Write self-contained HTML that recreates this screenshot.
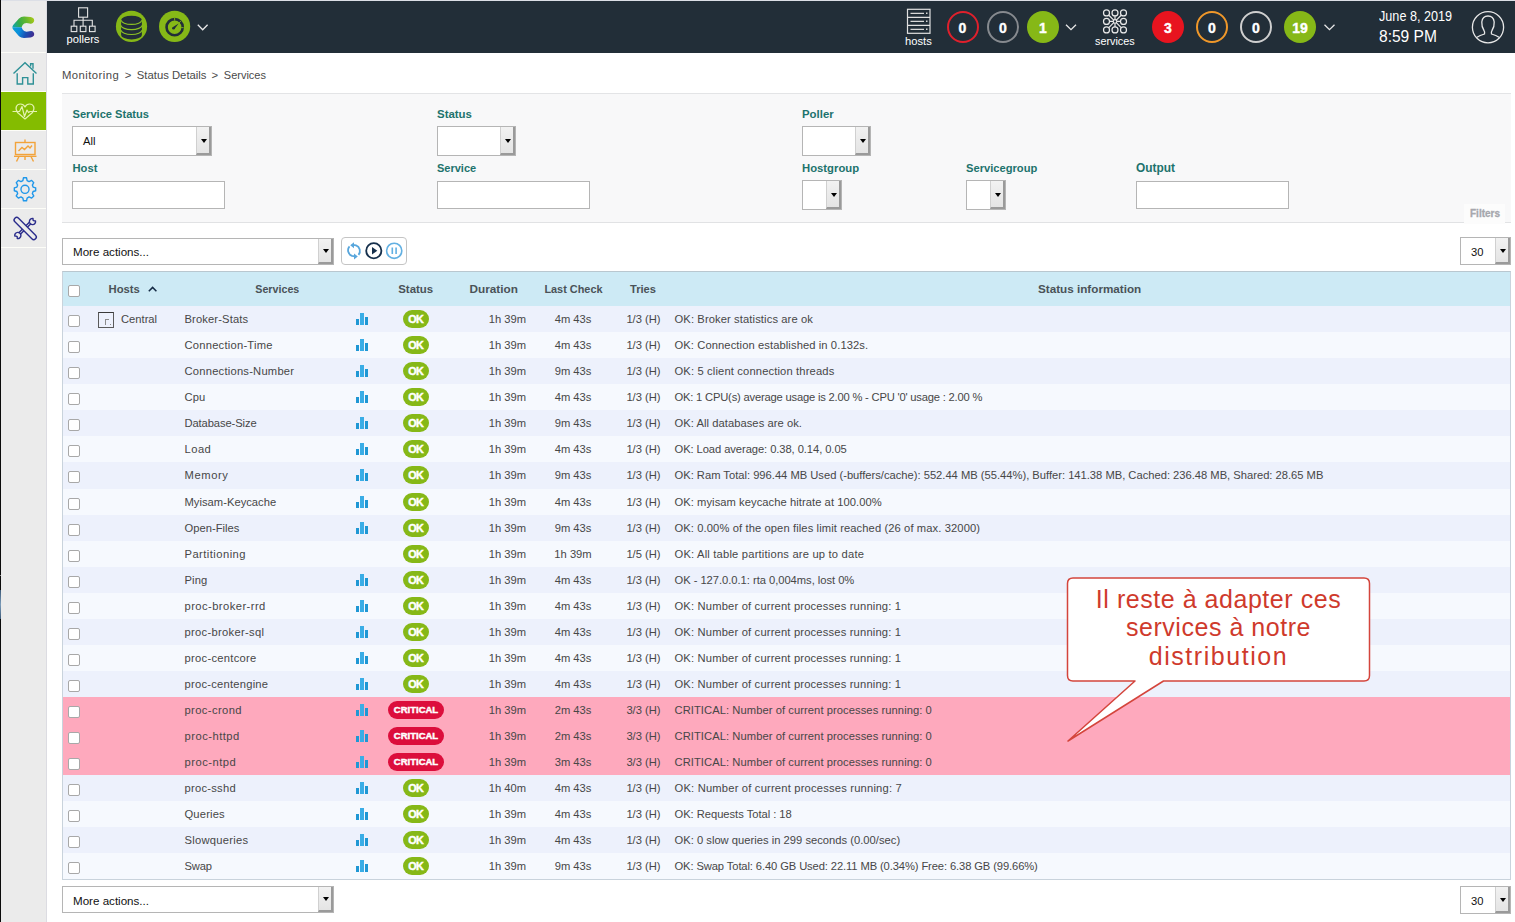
<!DOCTYPE html>
<html><head><meta charset="utf-8"><title>Centreon - Services</title>
<style>
*{box-sizing:border-box;margin:0;padding:0}
html,body{width:1515px;height:922px;overflow:hidden;background:#fff;font-family:"Liberation Sans",sans-serif;color:#333}
body{position:relative}
.a{position:absolute;display:block}
/* frame */
#topline{left:0;top:0;width:1515px;height:1px;background:#dcdfe6}
#leftline{left:0;top:0;width:1px;height:922px;background:#0a0a0a}
#side{left:1px;top:1px;width:45px;height:921px;background:#ebebeb}
#sideb{left:46px;top:1px;width:1px;height:921px;background:#dcdce2}
.sep{left:1px;width:45px;height:1px;background:#fdfdf8}
#green{left:1px;top:92px;width:45px;height:38px;background:#84bc00}
#header{left:47px;top:1px;width:1468px;height:52px;background:#222e38}
/* header text */
.htxt{color:#fff;font-size:11.2px;line-height:12px;white-space:nowrap}
.circ{width:32px;height:32px;border-radius:50%;color:#fff;font-weight:bold;font-size:14px;line-height:34px;text-align:center;top:11px;-webkit-text-stroke:0.4px #fff}
.chev{width:11px;height:7px;top:24px}
/* breadcrumb */
.bc{top:68px;font-size:11.3px;color:#4a4a4a;white-space:nowrap;line-height:14px}
/* filter panel */
#fpanel{left:62px;top:93px;width:1449px;height:130px;background:#f8f8f9;border-top:1px solid #e3e4e6;border-bottom:1px solid #e1e2e4}
.lbl{font-size:11.1px;font-weight:bold;color:#1d736d;line-height:12px;white-space:nowrap}
.inp{background:#fff;border:1px solid #b5b5b5}
.sel{background:#fff;border:1px solid #b5b5b5}
.sel .btn{position:absolute;right:0;top:0;bottom:0;width:15px;background:linear-gradient(#f2f2f2,#e4e4e4);border-left:1px solid #d0d0d0;border-right:2px solid #9a9a9a;border-bottom:2px solid #9a9a9a}
.sel .btn:after{content:"";position:absolute;left:3.5px;top:50%;margin-top:-1.5px;border-left:3.5px solid transparent;border-right:3.5px solid transparent;border-top:4px solid #000}
.seltxt{position:absolute;left:10px;font-size:11.2px;color:#111;white-space:nowrap}
#filtab{left:1464px;top:204px;width:41px;height:20px;background:#fcfcfc}
#filtxt{left:1470px;top:208px;font-size:10px;font-weight:bold;color:#a6a7ad;line-height:12px;-webkit-text-stroke:0.3px #a6a7ad}
/* toolbar */
#btngrp{left:341px;top:237px;width:66px;height:28px;border:1px solid #c4c4c4;border-radius:4px;background:#fff}
/* table */
#thead{left:62px;top:271px;width:1449px;height:34.5px;background:#cdeaf5;border-top:1px solid #b9c7cf;border-left:1px solid #c9d3dc;border-right:1px solid #c9d3dc}
.th{font-size:11.3px;font-weight:bold;color:#4a5258;line-height:12px;top:283px;white-space:nowrap}
#tbody{left:62px;top:305px;width:1449px;height:575px;border:1px solid #c9d3dc;border-top:none}
.row{position:absolute;left:63px;width:1447px;height:26.09px}
.rc{position:absolute;left:63px;width:1447px;height:26px}
.odd{background:#edf1fc}
.even{background:#f6f9fe}
.crit{background:#fea9bd}
.rc .c{position:absolute;top:0;line-height:26px;font-size:11.2px;color:#474747;white-space:nowrap;padding-top:1px}
.cb{position:absolute;left:5px;top:10px;width:12px;height:12px;border:1px solid #a8a8a8;border-radius:2px;background:#fff}
.hicon{position:absolute;left:35px;top:7px;width:16px;height:16px;border:1px solid #5a5a5a;border-top-color:#3a3a3a;background:transparent}
.hicon b{position:absolute;left:5.5px;top:5.5px;width:4px;height:6px;border-left:1px solid #8c8c8c;border-top:1px solid #8c8c8c}
.hicon b:after{content:"";position:absolute;left:4px;top:4.5px;width:1px;height:1px;background:#8c8c8c}
.host{left:58px}
.svc{left:121.5px}
.graph{position:absolute;left:292.5px;top:7px;width:14px;height:13px}
.graph b{position:absolute;bottom:0;width:3px;background:#1f97d4}
.graph b:nth-child(1){left:0;height:6px}
.graph b:nth-child(2){left:4.5px;width:4px;height:12px;background:#3aade6}
.graph b:nth-child(3){left:9.5px;height:8px}
.badge{position:absolute;top:5px;height:18px;border-radius:9px;color:#fff;font-weight:bold;font-size:9.8px;line-height:18px;text-align:center;-webkit-text-stroke:0.45px #fff}
.ok{left:340px;width:26px;background:#86b817;font-size:10.8px;letter-spacing:-0.7px;text-indent:-0.7px}
.cr{left:325px;width:56px;background:#dc0e3c;font-size:9.5px}
.dur{right:984px;text-align:right}
.lc{left:480px;width:60px;text-align:center}
.tr{left:550px;width:61px;text-align:center}
.info{left:611.5px}
.cbh{left:68px;top:285px;width:12px;height:12px;border:1px solid #a8a8a8;border-radius:2px;background:#fff}

</style></head><body>
<div id="topline" class="a"></div>
<div id="side" class="a"></div>
<div id="sideb" class="a"></div>
<div class="a sep" style="top:52px"></div>
<div class="a sep" style="top:91px"></div>
<div id="green" class="a"></div>
<div class="a sep" style="top:130px"></div>
<div class="a sep" style="top:169px"></div>
<div class="a sep" style="top:208px"></div>
<div class="a sep" style="top:247px"></div>
<div id="leftline" class="a"></div>
<div class="a" style="left:0;top:590px;width:1px;height:29px;background:linear-gradient(#3d5a78,#7a9ab8,#3d5a78)"></div>
<div class="a" style="left:0;top:575px;width:1px;height:1px;background:#888"></div>

<!-- sidebar icons -->
<svg class="a" style="left:0;top:0" width="47" height="250" viewBox="0 0 47 250">
  <defs>
    <linearGradient id="lg" x1="0" y1="0" x2="0" y2="1">
      <stop offset="0" stop-color="#a8c81a"/>
      <stop offset="0.3" stop-color="#3fae4a"/>
      <stop offset="0.55" stop-color="#06a2d4"/>
      <stop offset="0.78" stop-color="#1560c0"/>
      <stop offset="1" stop-color="#3a2a90"/>
    </linearGradient>
  </defs>
  <linearGradient id="lgt" gradientUnits="userSpaceOnUse" x1="12" y1="27" x2="34" y2="19">
      <stop offset="0" stop-color="#0aa4c0"/>
      <stop offset="0.35" stop-color="#34ab48"/>
      <stop offset="0.7" stop-color="#6ab82c"/>
      <stop offset="1" stop-color="#a9c91a"/>
    </linearGradient>
    <linearGradient id="lgb" gradientUnits="userSpaceOnUse" x1="12" y1="27" x2="34" y2="36">
      <stop offset="0" stop-color="#07a3d2"/>
      <stop offset="0.35" stop-color="#0a8fdc"/>
      <stop offset="0.65" stop-color="#1a50b4"/>
      <stop offset="1" stop-color="#44288c"/>
    </linearGradient>
    <clipPath id="cpt"><rect x="0" y="0" width="47" height="27.3"/></clipPath>
    <clipPath id="cpb"><rect x="0" y="27.3" width="47" height="30"/></clipPath>
  <path id="logoP" clip-path="url(#cpt)" d="M24,16.6 L30.5,17.1 Q35,18 34,21.6 Q33,24.4 29.5,23.4 L26.5,22.9 Q23.8,23 22.6,25 L21.6,27.3 L22.6,29.6 Q23.8,31.6 26.5,31.7 L29.5,31.2 Q33,30.2 34,33 Q35,36.6 30.5,37.5 L24,38.1 Q21,38.1 19,36.3 L13.2,29.6 Q11.6,27.3 13.2,25 L19,18.5 Q21,16.6 24,16.6 Z" fill="url(#lgt)"/>
  <path clip-path="url(#cpb)" d="M24,16.6 L30.5,17.1 Q35,18 34,21.6 Q33,24.4 29.5,23.4 L26.5,22.9 Q23.8,23 22.6,25 L21.6,27.3 L22.6,29.6 Q23.8,31.6 26.5,31.7 L29.5,31.2 Q33,30.2 34,33 Q35,36.6 30.5,37.5 L24,38.1 Q21,38.1 19,36.3 L13.2,29.6 Q11.6,27.3 13.2,25 L19,18.5 Q21,16.6 24,16.6 Z" fill="url(#lgb)"/>
  <!-- home -->
  <g fill="none" stroke="#2f9197" stroke-width="1.4">
    <path d="M13.5,73.5 L25,62.8 L36.5,73.5"/>
    <path d="M30.6,66.6 V63.8 H33 V68.8"/>
    <path d="M17.2,73.2 V84 H22.6 V77.6 H27.8 V84 H33.3 V73.2"/>
  </g>
  <!-- heart -->
  <g fill="none" stroke="#e3f2ae" stroke-width="1.2" stroke-linejoin="round">
    <path d="M17.5,112.5 C14.5,108 16.5,104 20.5,104 C23,104 24.5,106 25,107 C25.5,106 27,104 29.5,104 C33.5,104 35.5,108 32.5,112.5 L25,119 Z"/>
    <path d="M12.5,111.5 H19.5 L22,106.5 L24.5,116.5 L27,110 L28.5,112.5 L30,111.5 H37"/>
  </g>
  <!-- reporting -->
  <g fill="none" stroke="#f2a33a" stroke-width="1.4">
    <rect x="15.5" y="142.5" width="19.5" height="12"/>
    <path d="M25,139.5 V142.5"/>
    <path d="M14,156.3 H36.5"/>
    <path d="M19,156.5 L16.5,161.5 M25,156.5 V160 M31,156.5 L33.5,161.5"/>
    <path d="M18.5,151 L22,147.5 L24.5,149.5 L28,146 L30,148 L32,145.5"/>
  </g>
  <!-- gear -->
  <g fill="none" stroke="#1f97ea" stroke-width="1.5" transform="translate(25,189.3) scale(0.92) translate(-25,-189)">
    <path d="M23.3,178.5 H26.7 L27.3,181.5 L29.4,182.7 L32.2,181.3 L34.5,183.8 L33,186.4 L33.8,188.6 L36.6,189.4 V192.6 L33.8,193.4 L33,195.6 L34.5,198.2 L32.2,200.6 L29.4,199.3 L27.3,200.5 L26.7,203.5 H23.3 L22.7,200.5 L20.6,199.3 L17.8,200.6 L15.5,198.2 L17,195.6 L16.2,193.4 L13.4,192.6 V189.4 L16.2,188.6 L17,186.4 L15.5,183.8 L17.8,181.3 L20.6,182.7 L22.7,181.5 Z" transform="translate(0,-2)" stroke-linejoin="round"/>
    <circle cx="25" cy="189" r="4.4"/>
  </g>
  <!-- tools -->
  <g fill="none" stroke="#2b2d8c" stroke-width="1.4" stroke-linecap="round" stroke-linejoin="round">
    <path d="M35.55,221.0 A3.1,3.1 0 1 1 33.0,218.45 L33.1,220.3 L34.3,220.9 Z"/>
    <path d="M14.75,236.0 A3.1,3.1 0 1 1 17.3,238.55 L17.2,236.7 L16.0,236.1 Z"/>
    <path d="M20.6,234.0 L30.6,224.0 M19.1,232.5 L29.1,222.5"/>
    <rect x="-14.6" y="-2.6" width="29.2" height="5.2" rx="2.6" transform="translate(25.2,228.5) rotate(45)" fill="#ebebeb"/>
  </g>
</svg>

<div id="header" class="a"></div>
<!-- header left icons -->
<svg class="a" style="left:47px;top:0" width="180" height="53" viewBox="47 0 180 53">
  <g fill="none" stroke="#e4e4e4" stroke-width="1.1">
    <rect x="78.6" y="7.8" width="9" height="9.4"/>
    <path d="M83.1,17.2 V20.3 M74,26 V20.3 H92.3 V26 M83.1,20.3 V26"/>
    <rect x="71.2" y="26.2" width="5.6" height="5.4"/>
    <rect x="80.3" y="26.2" width="5.6" height="5.4"/>
    <rect x="89.5" y="26.2" width="5.6" height="5.4"/>
  </g>
  <circle cx="131.5" cy="26.4" r="15.6" fill="#86b817"/>
  <path d="M121.1,20.2 A10.4,4.5 0 0 1 141.9,20.2 V35 A10.4,4.4 0 0 1 121.1,35 Z" fill="#222e38"/>
  <g fill="none" stroke="#8cc125" stroke-width="1.1">
    <path d="M121.3,20.2 A10.2,4.2 0 0 0 141.7,20.2"/>
    <path d="M121.2,25.4 A10.3,4.2 0 0 0 141.8,25.4"/>
    <path d="M121.2,30.3 A10.3,4.2 0 0 0 141.8,30.3"/>
  </g>
  <circle cx="174.6" cy="26.4" r="15.6" fill="#86b817"/>
  <circle cx="174.65" cy="27.2" r="8.1" fill="none" stroke="#222e38" stroke-width="2.6"/>
  <g stroke="#86b817" stroke-width="0.9">
    <path d="M174.65,17.5 V20.5 M180.8,21.1 L178.9,23 M183.6,27.6 H181.2"/>
  </g>
  <path d="M172.6,27.3 L178.6,23.6 L174.3,29.2 Z" fill="#222e38"/>
  <circle cx="173.4" cy="28.3" r="1.3" fill="#222e38"/>
  <path d="M197.8,24.8 L202.7,29.8 L207.6,24.8" fill="none" stroke="#e8e8e8" stroke-width="1.3"/>
</svg>
<div class="a htxt" style="left:66.5px;top:33px">pollers</div>

<!-- hosts -->
<svg class="a" style="left:900px;top:0" width="440" height="53" viewBox="900 0 440 53">
  <g fill="none" stroke="#e0e0e0" stroke-width="1.2">
    <rect x="907.5" y="9.3" width="22.5" height="24"/>
    <path d="M907.5,17.3 H930 M907.5,25.3 H930"/>
  </g>
  <g stroke="#d8d8d8" stroke-width="1.3">
    <path d="M910.5,13.3 H924 M910.5,21.3 H924 M910.5,29.3 H924"/>
  </g>
  <g fill="#d8d8d8"><rect x="926" y="12.5" width="1.5" height="1.5"/><rect x="926" y="20.5" width="1.5" height="1.5"/><rect x="926" y="28.5" width="1.5" height="1.5"/></g>
  <path d="M1066,24.7 L1071,29.7 L1076,24.7" fill="none" stroke="#e8e8e8" stroke-width="1.3"/>
  <!-- services grid -->
  <g fill="none" stroke="#e8e8e8" stroke-width="1.2">
    <circle cx="1106.5" cy="12.9" r="3"/><circle cx="1115" cy="12.9" r="3"/><circle cx="1123.5" cy="12.9" r="3"/>
    <circle cx="1106.5" cy="21.4" r="3"/><circle cx="1123.5" cy="21.4" r="3"/>
    <circle cx="1106.5" cy="29.9" r="3"/><circle cx="1115" cy="29.9" r="3"/><circle cx="1123.5" cy="29.9" r="3"/>
    <circle cx="1115" cy="21.4" r="1.8"/>
    <path d="M1109.5,21.4 H1113.2 M1116.8,21.4 H1120.5 M1115,15.9 V19.6 M1115,23.2 V26.9 M1108.6,15 L1113.7,20.1 M1121.4,15 L1116.3,20.1 M1108.6,27.8 L1113.7,22.7 M1121.4,27.8 L1116.3,22.7"/>
  </g>
  <path d="M1324.5,24.7 L1329.5,29.7 L1334.5,24.7" fill="none" stroke="#e8e8e8" stroke-width="1.3"/>
</svg>
<div class="a htxt" style="left:905px;top:35px">hosts</div>
<div class="a htxt" style="left:1095px;top:35px;font-size:10.8px">services</div>

<div class="a circ" style="left:946.5px;border:2px solid #e0202c;line-height:31px">0</div>
<div class="a circ" style="left:987px;border:2px solid #868a8f;line-height:31px">0</div>
<div class="a circ" style="left:1027px;background:#86b817">1</div>
<div class="a circ" style="left:1152px;background:#e8141f">3</div>
<div class="a circ" style="left:1196px;border:2px solid #f0982a;line-height:31px">0</div>
<div class="a circ" style="left:1240px;border:2px solid #cfcfcf;line-height:31px">0</div>
<div class="a circ" style="left:1284px;background:#86b817">19</div>

<div class="a" style="left:1379px;top:8px;color:#fff;font-size:14.3px;line-height:16px;white-space:nowrap;transform:scaleX(0.884);transform-origin:0 0">June 8, 2019</div>
<div class="a" style="left:1378.5px;top:27px;color:#fff;font-size:17.2px;line-height:18px;white-space:nowrap;transform:scaleX(0.905);transform-origin:0 0">8:59 PM</div>
<svg class="a" style="left:1470px;top:9px" width="36" height="36" viewBox="1470 9 36 36">
  <g fill="none" stroke="#e8e8e8" stroke-width="1.3">
    <circle cx="1488" cy="27.2" r="15.6"/>
    <path d="M1476.5,37.5 Q1480,35.3 1484.5,34 Q1485,32 1484,30.5 Q1481.5,27 1481.8,22 Q1482.5,16 1488,16 Q1493.5,16 1494.2,22 Q1494.5,27 1492,30.5 Q1491,32 1491.5,34 Q1496,35.3 1499.5,37.5"/>
  </g>
</svg>

<!-- breadcrumb -->
<div class="a bc" style="left:62px;letter-spacing:0.45px">Monitoring</div>
<div class="a bc" style="left:124.8px">&gt;</div>
<div class="a bc" style="left:136.8px">Status Details</div>
<div class="a bc" style="left:211.5px">&gt;</div>
<div class="a bc" style="left:223.8px;font-size:11px">Services</div>

<!-- filter panel -->
<div id="fpanel" class="a"></div>
<div class="a lbl" style="left:72.5px;top:108px;font-size:11.1px">Service Status</div>
<div class="a lbl" style="left:437px;top:108px;font-size:11.45px">Status</div>
<div class="a lbl" style="left:802px;top:108px;font-size:11.4px">Poller</div>
<div class="a lbl" style="left:72.5px;top:162px;font-size:11.2px">Host</div>
<div class="a lbl" style="left:437px;top:162px;font-size:11px">Service</div>
<div class="a lbl" style="left:802px;top:162px;font-size:11.3px">Hostgroup</div>
<div class="a lbl" style="left:966px;top:162px;font-size:11.17px">Servicegroup</div>
<div class="a lbl" style="left:1136px;top:162px;font-size:11.9px">Output</div>

<div class="a sel" style="left:72px;top:126px;width:140px;height:30px"><span class="seltxt" style="top:8px">All</span><i class="btn"></i></div>
<div class="a sel" style="left:437px;top:126px;width:79px;height:30px"><i class="btn"></i></div>
<div class="a sel" style="left:802px;top:126px;width:69px;height:30px"><i class="btn"></i></div>
<div class="a inp" style="left:72px;top:181px;width:153px;height:28px"></div>
<div class="a inp" style="left:437px;top:181px;width:153px;height:28px"></div>
<div class="a sel" style="left:802px;top:180px;width:40px;height:30px"><i class="btn"></i></div>
<div class="a sel" style="left:966px;top:180px;width:40px;height:30px"><i class="btn"></i></div>
<div class="a inp" style="left:1136px;top:181px;width:153px;height:28px"></div>
<div id="filtab" class="a"></div>
<div id="filtxt" class="a">Filters</div>

<!-- toolbar -->
<div class="a sel" style="left:62px;top:238px;width:272px;height:27px"><span class="seltxt" style="top:6px;left:10px;font-size:11.6px">More actions...</span><i class="btn"></i></div>
<div id="btngrp" class="a"></div>
<svg class="a" style="left:341px;top:237px" width="66" height="28" viewBox="341 237 66 28">
  <g transform="translate(708,-0.6) scale(-1,1)">
  <g fill="none" stroke="#58a6dc" stroke-width="1.8">
    <path d="M349.5,255.5 A6,6 0 0 1 352,246 L355,245.5"/>
    <path d="M358.5,247 A6,6 0 0 1 356,256.5 L353,257"/>
  </g>
  <path d="M354,242.8 L357.8,245.8 L354,248.8 Z M354,254 L350.2,257 L354,260 Z" fill="#58a6dc"/>
  </g>
  <circle cx="373.8" cy="250.8" r="7.6" fill="none" stroke="#16304c" stroke-width="1.8"/>
  <path d="M372,247 L377.3,250.8 L372,254.6 Z" fill="#16304c"/>
  <circle cx="394.2" cy="250.8" r="7.6" fill="none" stroke="#62b0e2" stroke-width="1.6"/>
  <path d="M392.3,247.5 V254 M396.1,247.5 V254" stroke="#62b0e2" stroke-width="1.6"/>
</svg>
<div class="a sel" style="left:1460px;top:237px;width:51px;height:28px"><span class="seltxt" style="top:8px;left:10px">30</span><i class="btn"></i></div>

<!-- table -->
<div id="thead" class="a"></div>
<div id="tbody" class="a"></div>
<div class="a cbh"></div>
<div class="a th" style="left:108.5px">Hosts</div>
<svg class="a" style="left:147px;top:285px" width="12" height="8" viewBox="0 0 12 8"><path d="M1.8,6.2 L5.6,2.4 L9.4,6.2" fill="none" stroke="#142a44" stroke-width="1.5"/></svg>
<div class="a th" style="left:255.3px;font-size:10.7px">Services</div>
<div class="a th" style="left:398.2px;font-size:11.45px">Status</div>
<div class="a th" style="left:469.5px;font-size:11.75px">Duration</div>
<div class="a th" style="left:544.4px;font-size:10.9px">Last Check</div>
<div class="a th" style="left:630px;font-size:11.15px">Tries</div>
<div class="a th" style="left:1038px;font-size:11.7px">Status information</div>

<div class="row odd" style="top:305.50px;height:26px"></div><div class="rc" style="top:305px"><i class="cb"></i><i class="hicon"><b></b></i><span class="c host">Central</span><span class="c svc" style="letter-spacing:0.127px">Broker-Stats</span><i class="graph"><b></b><b></b><b></b></i><span class="badge ok">OK</span><span class="c dur">1h 39m</span><span class="c lc">4m 43s</span><span class="c tr">1/3 (H)</span><span class="c info" style="letter-spacing:0.107px">OK: Broker statistics are ok</span></div>
<div class="row even" style="top:331.50px;height:26px"></div><div class="rc" style="top:331px"><i class="cb"></i><span class="c svc" style="letter-spacing:0.229px">Connection-Time</span><i class="graph"><b></b><b></b><b></b></i><span class="badge ok">OK</span><span class="c dur">1h 39m</span><span class="c lc">4m 43s</span><span class="c tr">1/3 (H)</span><span class="c info" style="letter-spacing:0.092px">OK: Connection established in 0.132s.</span></div>
<div class="row odd" style="top:357.50px;height:26px"></div><div class="rc" style="top:357px"><i class="cb"></i><span class="c svc" style="letter-spacing:0.224px">Connections-Number</span><i class="graph"><b></b><b></b><b></b></i><span class="badge ok">OK</span><span class="c dur">1h 39m</span><span class="c lc">9m 43s</span><span class="c tr">1/3 (H)</span><span class="c info" style="letter-spacing:0.143px">OK: 5 client connection threads</span></div>
<div class="row even" style="top:383.50px;height:26px"></div><div class="rc" style="top:383px"><i class="cb"></i><span class="c svc" style="letter-spacing:0.050px">Cpu</span><i class="graph"><b></b><b></b><b></b></i><span class="badge ok">OK</span><span class="c dur">1h 39m</span><span class="c lc">4m 43s</span><span class="c tr">1/3 (H)</span><span class="c info" style="letter-spacing:-0.193px">OK: 1 CPU(s) average usage is 2.00 % - CPU &#39;0&#39; usage : 2.00 %</span></div>
<div class="row odd" style="top:409.50px;height:26px"></div><div class="rc" style="top:409px"><i class="cb"></i><span class="c svc" style="letter-spacing:-0.100px">Database-Size</span><i class="graph"><b></b><b></b><b></b></i><span class="badge ok">OK</span><span class="c dur">1h 39m</span><span class="c lc">9m 43s</span><span class="c tr">1/3 (H)</span><span class="c info" style="letter-spacing:0.050px">OK: All databases are ok.</span></div>
<div class="row even" style="top:435.50px;height:26px"></div><div class="rc" style="top:435px"><i class="cb"></i><span class="c svc" style="letter-spacing:0.467px">Load</span><i class="graph"><b></b><b></b><b></b></i><span class="badge ok">OK</span><span class="c dur">1h 39m</span><span class="c lc">4m 43s</span><span class="c tr">1/3 (H)</span><span class="c info" style="letter-spacing:-0.076px">OK: Load average: 0.38, 0.14, 0.05</span></div>
<div class="row odd" style="top:461.50px;height:27px"></div><div class="rc" style="top:461px"><i class="cb"></i><span class="c svc" style="letter-spacing:0.600px">Memory</span><i class="graph"><b></b><b></b><b></b></i><span class="badge ok">OK</span><span class="c dur">1h 39m</span><span class="c lc">9m 43s</span><span class="c tr">1/3 (H)</span><span class="c info" style="letter-spacing:-0.008px">OK: Ram Total: 996.44 MB Used (-buffers/cache): 552.44 MB (55.44%), Buffer: 141.38 MB, Cached: 236.48 MB, Shared: 28.65 MB</span></div>
<div class="row even" style="top:488.50px;height:26px"></div><div class="rc" style="top:488px"><i class="cb"></i><span class="c svc" style="letter-spacing:0.021px">Myisam-Keycache</span><i class="graph"><b></b><b></b><b></b></i><span class="badge ok">OK</span><span class="c dur">1h 39m</span><span class="c lc">4m 43s</span><span class="c tr">1/3 (H)</span><span class="c info" style="letter-spacing:0.054px">OK: myisam keycache hitrate at 100.00%</span></div>
<div class="row odd" style="top:514.50px;height:26px"></div><div class="rc" style="top:514px"><i class="cb"></i><span class="c svc" style="letter-spacing:0.022px">Open-Files</span><i class="graph"><b></b><b></b><b></b></i><span class="badge ok">OK</span><span class="c dur">1h 39m</span><span class="c lc">9m 43s</span><span class="c tr">1/3 (H)</span><span class="c info" style="letter-spacing:0.098px">OK: 0.00% of the open files limit reached (26 of max. 32000)</span></div>
<div class="row even" style="top:540.50px;height:26px"></div><div class="rc" style="top:540px"><i class="cb"></i><span class="c svc" style="letter-spacing:0.455px">Partitioning</span><span class="badge ok">OK</span><span class="c dur">1h 39m</span><span class="c lc">1h 39m</span><span class="c tr">1/5 (H)</span><span class="c info" style="letter-spacing:0.189px">OK: All table partitions are up to date</span></div>
<div class="row odd" style="top:566.50px;height:26px"></div><div class="rc" style="top:566px"><i class="cb"></i><span class="c svc" style="letter-spacing:0.100px">Ping</span><i class="graph"><b></b><b></b><b></b></i><span class="badge ok">OK</span><span class="c dur">1h 39m</span><span class="c lc">4m 43s</span><span class="c tr">1/3 (H)</span><span class="c info" style="letter-spacing:-0.034px">OK - 127.0.0.1: rta 0,004ms, lost 0%</span></div>
<div class="row even" style="top:592.50px;height:26px"></div><div class="rc" style="top:592px"><i class="cb"></i><span class="c svc" style="letter-spacing:0.443px">proc-broker-rrd</span><i class="graph"><b></b><b></b><b></b></i><span class="badge ok">OK</span><span class="c dur">1h 39m</span><span class="c lc">4m 43s</span><span class="c tr">1/3 (H)</span><span class="c info" style="letter-spacing:0.171px">OK: Number of current processes running: 1</span></div>
<div class="row odd" style="top:618.50px;height:26px"></div><div class="rc" style="top:618px"><i class="cb"></i><span class="c svc" style="letter-spacing:0.307px">proc-broker-sql</span><i class="graph"><b></b><b></b><b></b></i><span class="badge ok">OK</span><span class="c dur">1h 39m</span><span class="c lc">4m 43s</span><span class="c tr">1/3 (H)</span><span class="c info" style="letter-spacing:0.171px">OK: Number of current processes running: 1</span></div>
<div class="row even" style="top:644.50px;height:26px"></div><div class="rc" style="top:644px"><i class="cb"></i><span class="c svc" style="letter-spacing:0.283px">proc-centcore</span><i class="graph"><b></b><b></b><b></b></i><span class="badge ok">OK</span><span class="c dur">1h 39m</span><span class="c lc">4m 43s</span><span class="c tr">1/3 (H)</span><span class="c info" style="letter-spacing:0.171px">OK: Number of current processes running: 1</span></div>
<div class="row odd" style="top:670.50px;height:26px"></div><div class="rc" style="top:670px"><i class="cb"></i><span class="c svc" style="letter-spacing:0.236px">proc-centengine</span><i class="graph"><b></b><b></b><b></b></i><span class="badge ok">OK</span><span class="c dur">1h 39m</span><span class="c lc">4m 43s</span><span class="c tr">1/3 (H)</span><span class="c info" style="letter-spacing:0.171px">OK: Number of current processes running: 1</span></div>
<div class="row crit" style="top:696.50px;height:26px"></div><div class="rc" style="top:696px"><i class="cb"></i><span class="c svc" style="letter-spacing:0.400px">proc-crond</span><i class="graph"><b></b><b></b><b></b></i><span class="badge cr">CRITICAL</span><span class="c dur">1h 39m</span><span class="c lc">2m 43s</span><span class="c tr">3/3 (H)</span><span class="c info" style="letter-spacing:0.064px">CRITICAL: Number of current processes running: 0</span></div>
<div class="row crit" style="top:722.50px;height:26px"></div><div class="rc" style="top:722px"><i class="cb"></i><span class="c svc" style="letter-spacing:0.489px">proc-httpd</span><i class="graph"><b></b><b></b><b></b></i><span class="badge cr">CRITICAL</span><span class="c dur">1h 39m</span><span class="c lc">2m 43s</span><span class="c tr">3/3 (H)</span><span class="c info" style="letter-spacing:0.064px">CRITICAL: Number of current processes running: 0</span></div>
<div class="row crit" style="top:748.50px;height:26px"></div><div class="rc" style="top:748px"><i class="cb"></i><span class="c svc" style="letter-spacing:0.500px">proc-ntpd</span><i class="graph"><b></b><b></b><b></b></i><span class="badge cr">CRITICAL</span><span class="c dur">1h 39m</span><span class="c lc">3m 43s</span><span class="c tr">3/3 (H)</span><span class="c info" style="letter-spacing:0.064px">CRITICAL: Number of current processes running: 0</span></div>
<div class="row odd" style="top:774.50px;height:26px"></div><div class="rc" style="top:774px"><i class="cb"></i><span class="c svc" style="letter-spacing:0.250px">proc-sshd</span><i class="graph"><b></b><b></b><b></b></i><span class="badge ok">OK</span><span class="c dur">1h 40m</span><span class="c lc">4m 43s</span><span class="c tr">1/3 (H)</span><span class="c info" style="letter-spacing:0.188px">OK: Number of current processes running: 7</span></div>
<div class="row even" style="top:800.50px;height:26px"></div><div class="rc" style="top:800px"><i class="cb"></i><span class="c svc" style="letter-spacing:0.167px">Queries</span><i class="graph"><b></b><b></b><b></b></i><span class="badge ok">OK</span><span class="c dur">1h 39m</span><span class="c lc">4m 43s</span><span class="c tr">1/3 (H)</span><span class="c info" style="letter-spacing:-0.032px">OK: Requests Total : 18</span></div>
<div class="row odd" style="top:826.50px;height:26px"></div><div class="rc" style="top:826px"><i class="cb"></i><span class="c svc" style="letter-spacing:0.260px">Slowqueries</span><i class="graph"><b></b><b></b><b></b></i><span class="badge ok">OK</span><span class="c dur">1h 39m</span><span class="c lc">4m 43s</span><span class="c tr">1/3 (H)</span><span class="c info" style="letter-spacing:0.012px">OK: 0 slow queries in 299 seconds (0.00/sec)</span></div>
<div class="row even" style="top:852.50px;height:26px"></div><div class="rc" style="top:852px"><i class="cb"></i><span class="c svc" style="letter-spacing:-0.200px">Swap</span><i class="graph"><b></b><b></b><b></b></i><span class="badge ok">OK</span><span class="c dur">1h 39m</span><span class="c lc">9m 43s</span><span class="c tr">1/3 (H)</span><span class="c info" style="letter-spacing:-0.110px">OK: Swap Total: 6.40 GB Used: 22.11 MB (0.34%) Free: 6.38 GB (99.66%)</span></div>

<!-- bottom toolbar -->
<div class="a sel" style="left:62px;top:886px;width:272px;height:27px"><span class="seltxt" style="top:7px;left:10px;font-size:11.6px">More actions...</span><i class="btn"></i></div>
<div class="a sel" style="left:1460px;top:886px;width:51px;height:28px"><span class="seltxt" style="top:8px;left:10px">30</span><i class="btn"></i></div>

<!-- comment bubble -->
<svg class="a" style="left:1060px;top:570px" width="320" height="180" viewBox="1060 570 320 180">
  <path d="M1073,578 H1364 Q1369.5,578 1369.5,583.5 V675.5 Q1369.5,681 1364,681 H1163.5 L1068,741 L1135,681 H1073 Q1067.5,681 1067.5,675.5 V583.5 Q1067.5,578 1073,578 Z" fill="#fff" stroke="#d4453c" stroke-width="1.5" stroke-linejoin="round"/>
</svg>
<div class="a" style="left:1067px;top:584.5px;width:303px;text-align:center;color:#cf3a2c;font-size:25px;line-height:28.8px"><span style="letter-spacing:0.54px">Il reste à adapter ces</span><br><span style="letter-spacing:0.53px">services à notre</span><br><span style="letter-spacing:1.55px">distribution</span></div>

</body></html>
